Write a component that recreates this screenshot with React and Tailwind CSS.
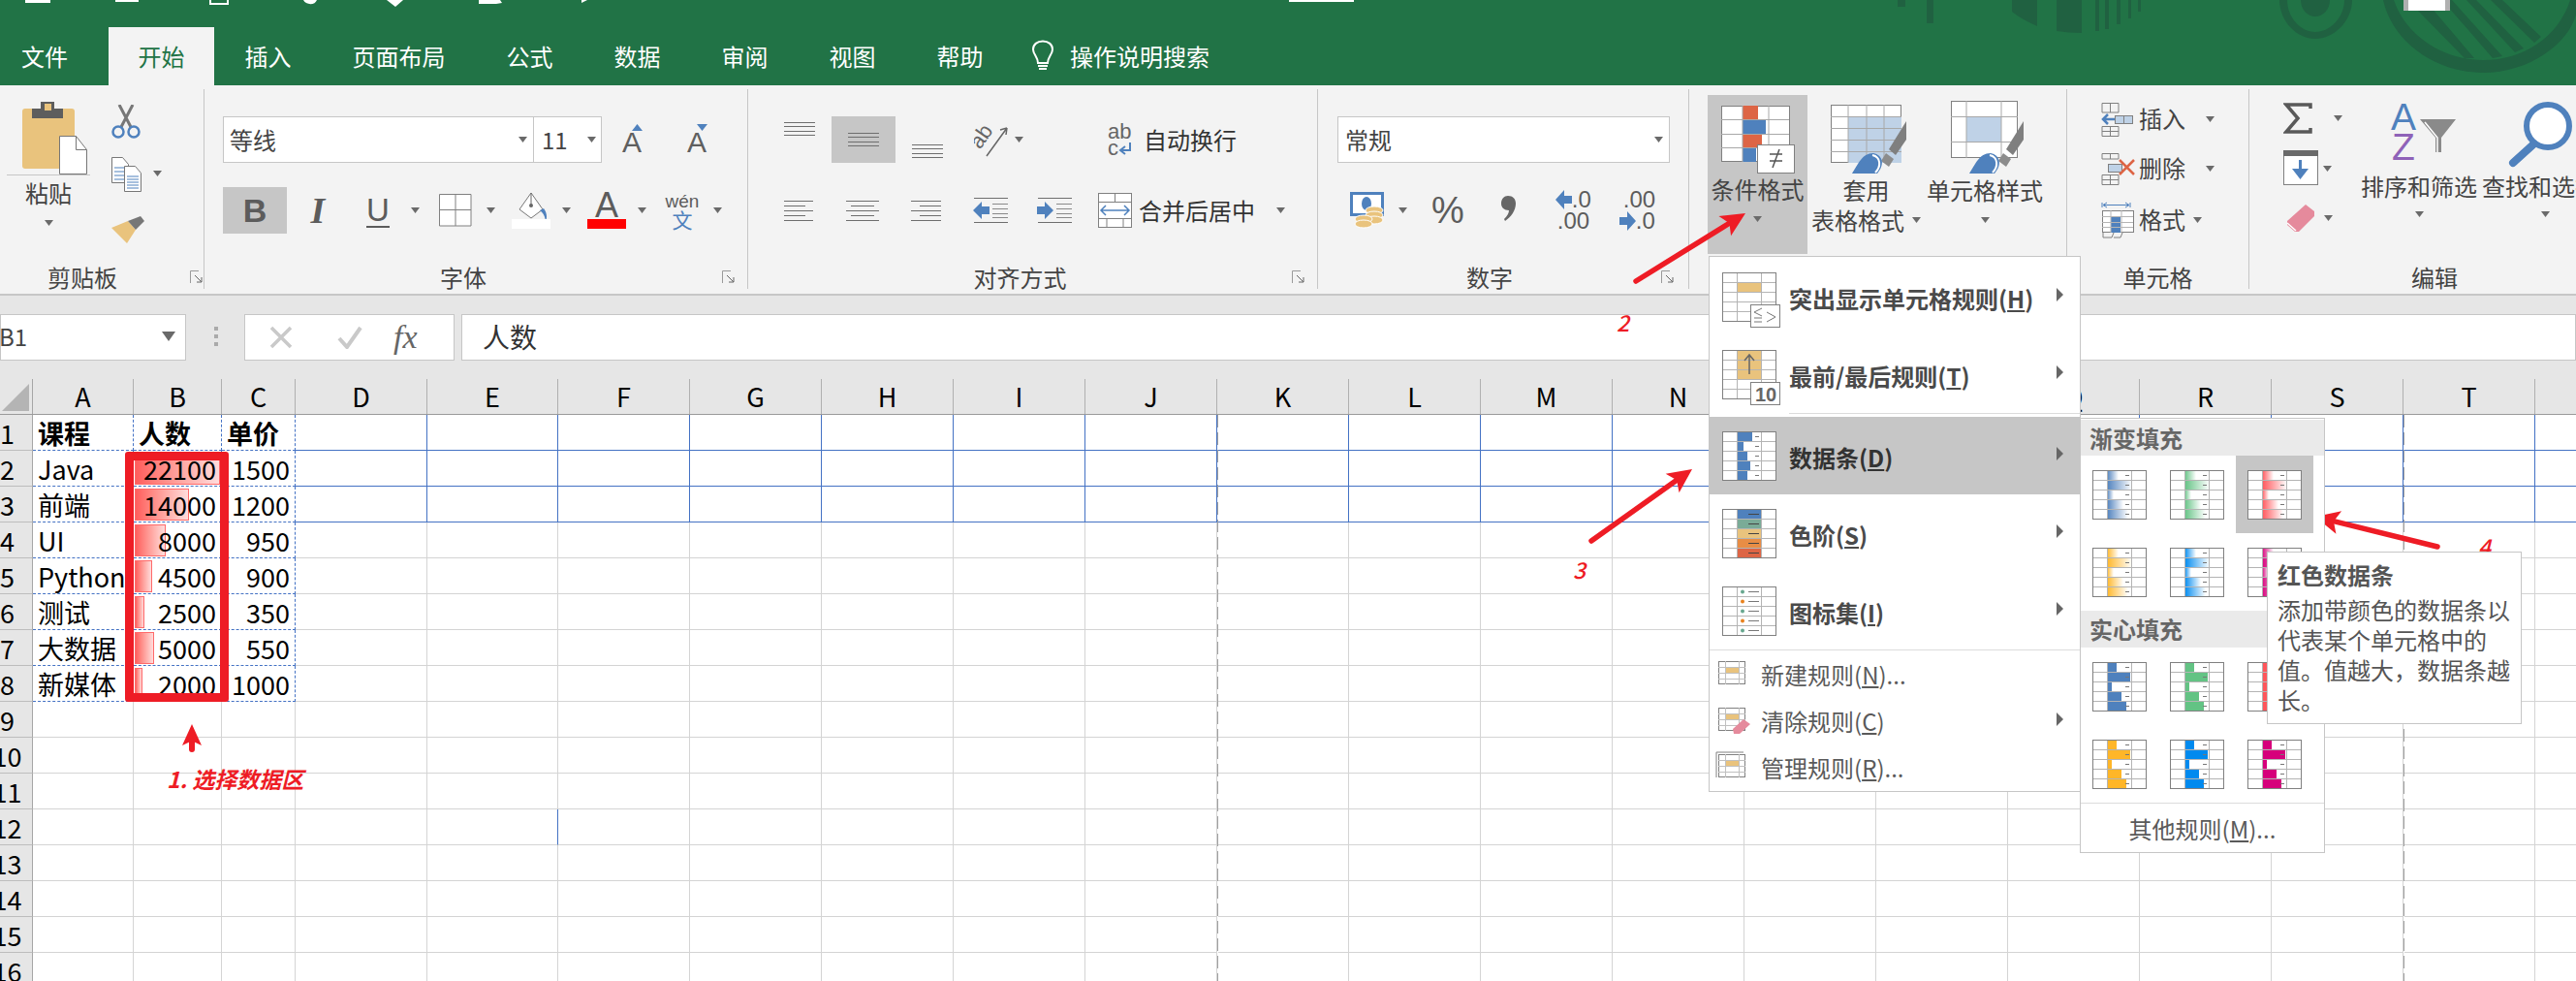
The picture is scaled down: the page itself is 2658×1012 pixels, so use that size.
const GRAY = "#5f5f5f";
const BLUE = "#4f81bd";
const TAN = "#e9c37d";

function Caret({ className = "" }) {
  return (
    <svg width="9" height="6" className={`shrink-0 ${className}`}>
      <path d="M0 0H9L4.5 6Z" fill="#6a6a6a" />
    </svg>
  );
}

function Launcher() {
  return (
    <svg width="14" height="14" className="shrink-0">
      <path d="M.5 13V.5H9" fill="none" stroke="#9a9a9a" />
      <path d="M5 5L12 12M12 7V12H7" fill="none" stroke="#666" />
    </svg>
  );
}

// ribbon group, label row sits at the bottom
function Group({ className, label, labelClass = "", launcher, children }) {
  return (
    <div className={`flex h-[215px] shrink-0 flex-col ${className}`}>
      <div className="relative flex-1">{children}</div>
      <div className="flex h-[32px] items-center pb-[3px]">
        <div className={`flex-1 text-center text-[24px] leading-[29px] text-[#444] ${labelClass}`}>{label}</div>
        {launcher && <Launcher />}
      </div>
    </div>
  );
}

function Sep() {
  return <div className="my-[4px] h-[206px] w-px shrink-0 bg-[#c6c6c6]" />;
}

/* clipboard icons */
function PasteIcon() {
  return (
    <svg width="68" height="76">
      <rect x="0" y="8" width="54" height="62" rx="3" fill={TAN} />
      <path d="M10 18V8h9V1h14v7h9v10z" fill="#5d5d5d" />
      <rect x="23" y="3" width="7" height="7" fill={TAN} />
      <path d="M38.500 36.500h17l11 14v25h-28z" fill="#fff" stroke="#777" />
      <path d="M55.500 36.500v14h11" fill="none" stroke="#777" />
    </svg>
  );
}
function ScissorsIcon() {
  return (
    <svg width="30" height="35">
      <path d="M8 0L20 23M22 0L10 23" stroke="#777" strokeWidth="3" fill="none" />
      <ellipse cx="7" cy="28" rx="5.500" ry="5.500" fill="none" stroke={BLUE} strokeWidth="2.500" />
      <ellipse cx="23" cy="28" rx="5.500" ry="5.500" fill="none" stroke={BLUE} strokeWidth="2.500" />
    </svg>
  );
}
function CopyIcon() {
  return (
    <svg width="31" height="36">
      <path d="M.5.500h11l6 7v19H.5z" fill="#fff" stroke="#777" />
      <path d="M13.500 9.500h11l6 7v19h-17z" fill="#fff" stroke="#777" />
      <path d="M3 11h10M3 15h10M3 19h10M3 23h10M16 20h12M16 23h12M16 26h12M16 29h12M16 32h12" stroke={BLUE} />
    </svg>
  );
}
function PainterIcon() {
  return (
    <svg width="34" height="28">
      <path d="M0 12L17 5L25 14L16 28Z" fill={TAN} />
      <path d="M17 5L25 14L34 5L30 0Z" fill="#777" />
    </svg>
  );
}

/* font group */
function AGrow({ up }) {
  return (
    <div className="flex w-[20px] flex-col items-center">
      <svg width="11" height="7" className="ml-[10px]">
        {up ? <path d="M0 7H11L5.500 0Z" fill={BLUE} /> : <path d="M0 0H11L5.500 7Z" fill={BLUE} />}
      </svg>
      <span className="font-['Liberation_Sans',sans-serif] text-[30px] leading-[24px] text-[#5f5f5f]">A</span>
    </div>
  );
}
function FillIcon() {
  return (
    <div className="flex w-[40px] flex-col items-center">
      <svg width="34" height="28">
        <path d="M17 1L5 18L17 27L29 18Z" fill="#fff" stroke="#777" />
        <circle cx="17" cy="14" r="2" fill="#666" />
        <path d="M17 1V13" stroke="#666" />
        <path d="M30 17c3 4 4 9 2 13c-1-5-2-8-6-11z" fill={BLUE} />
      </svg>
      <div className="h-[10px] w-[40px] bg-white" />
    </div>
  );
}

/* alignment group */
function Lines({ w, h, rows, align = "left" }) {
  const step = (h - 1) / (rows.length - 1);
  return (
    <svg width={w} height={h} className="shrink-0">
      {rows.map((len, i) => {
        const x = align === "left" ? 0 : align === "right" ? w - len : (w - len) / 2;
        return <rect key={i} x={x} y={Math.round(i * step)} width={len} height="1" fill="#6e6e6e" />;
      })}
    </svg>
  );
}
function Indent({ flip }) {
  return (
    <svg width="36" height="26" className="shrink-0">
      <path d="M1 .5H36M1 25.500H36" stroke="#6e6e6e" />
      <path d="M20 6.500H36M20 11.500H36M20 16.500H36M20 20.500H36" stroke="#8a8a8a" />
      {flip ? <path d="M0 9H8V4L17 13L8 22V17H0Z" fill={BLUE} /> : <path d="M17 9H9V4L0 13L9 22V17H17Z" fill={BLUE} />}
    </svg>
  );
}
function OrientIcon() {
  return (
    <svg width="36" height="34" className="shrink-0">
      <path d="M13 33L34 4M34 4L27 6M34 4L33 11" fill="none" stroke="#666" strokeWidth="1.500" />
      <text x="-1" y="19" transform="rotate(-55 10 16)" fontFamily="Liberation Sans" fontSize="22" fill="#666">ab</text>
    </svg>
  );
}
function WrapIcon() {
  return (
    <svg width="26" height="34" className="shrink-0">
      <text x="0" y="16" fontFamily="Liberation Sans" fontSize="22" fill="#666">ab</text>
      <text x="0" y="33" fontFamily="Liberation Sans" fontSize="22" fill="#666">c</text>
      <path d="M23 20V28H14M18 24L13 28L18 32" fill="none" stroke={BLUE} strokeWidth="2" />
    </svg>
  );
}
function MergeIcon() {
  return (
    <svg width="36" height="37" className="shrink-0">
      <rect x=".5" y=".5" width="34" height="35" fill="#fff" stroke="#808080" />
      <path d="M0 9.500H35M0 26.500H35M17.500 0V9M9 27V36M26 27V36" stroke="#808080" />
      <path d="M3 18H32M8 13L3 18L8 23M27 13L32 18L27 23" fill="none" stroke={BLUE} strokeWidth="1.500" />
    </svg>
  );
}

/* number group */
function MoneyIcon() {
  return (
    <svg width="36" height="38" className="shrink-0">
      <rect x="1.500" y="1.500" width="32" height="22" fill="#fff" stroke={BLUE} strokeWidth="3" />
      <ellipse cx="17" cy="12" rx="5" ry="7" fill={BLUE} />
      <ellipse cx="25" cy="19" rx="9" ry="4" fill={TAN} stroke="#fff" />
      <ellipse cx="25" cy="24" rx="9" ry="4" fill={TAN} stroke="#fff" />
      <ellipse cx="25" cy="29" rx="9" ry="4" fill={TAN} stroke="#fff" />
      <ellipse cx="14" cy="28" rx="9" ry="4" fill={TAN} stroke="#fff" />
      <ellipse cx="14" cy="33" rx="9" ry="4" fill={TAN} stroke="#fff" />
    </svg>
  );
}
function CommaIcon() {
  return (
    <svg width="16" height="26" className="shrink-0">
      <path d="M8 0C13 0 16 3 16 8C16 15 11 22 5 26L4 24C7 21 9 18 9 15C4 15 1 12 1 8C1 3 4 0 8 0Z" fill="#666" />
    </svg>
  );
}
function SmallArrow({ right }) {
  return (
    <svg width="17" height="20" className="shrink-0">
      {right ? <path d="M0 6H8V0L17 10L8 20V14H0Z" fill={BLUE} /> : <path d="M17 6H9V0L0 10L9 20V14H17Z" fill={BLUE} />}
    </svg>
  );
}

/* styles group */
function CondFormatIcon() {
  return (
    <svg width="76" height="70" className="overflow-visible">
      <rect x=".5" y=".5" width="70" height="57" fill="#fff" stroke="#808080" />
      <rect x="22" y="0" width="16" height="14" fill="#dd6545" />
      <rect x="22" y="15" width="24" height="14" fill={BLUE} />
      <rect x="22" y="30" width="20" height="14" fill="#dd6545" />
      <rect x="22" y="44" width="14" height="14" fill={BLUE} />
      <path d="M22 0V58M49 0V58M0 14.500H70M0 29.500H70M0 43.500H70" stroke="#a8a8a8" />
      <rect x="37.500" y="40.500" width="38" height="29" fill="#fff" stroke="#808080" />
      <path d="M50 50H63M50 57H63M60 45L53 64" stroke="#555" strokeWidth="1.500" fill="none" />
    </svg>
  );
}
function Brush() {
  return (
    <g>
      <path d="M78 17L78 36L67 52L60 46Z" fill="#7f7f7f" />
      <path d="M57 50L65 56L60 64L52 58Z" fill="#8c8c8c" />
      <path d="M22 71C28 62 32 50 44 50C54 52 56 62 48 71Z" fill={BLUE} />
      <path d="M43 52C52 54 52 64 46 70" fill="none" stroke="#fff" strokeWidth="2" />
    </g>
  );
}
function TableStyleIcon() {
  return (
    <svg width="78" height="72">
      <rect x=".5" y=".5" width="72" height="59" fill="#fff" stroke="#808080" />
      <rect x="18" y="12" width="55" height="48" fill="#bfd2e7" />
      <path d="M18 0V60M37 0V60M55 0V60M0 12.500H73M0 24.500H73M0 36.500H73M0 48.500H73" stroke="#a8a8a8" />
      <Brush />
    </svg>
  );
}
function CellStyleIcon() {
  return (
    <svg width="76" height="76">
      <rect x=".5" y=".5" width="68" height="58" fill="#fff" stroke="#808080" />
      <rect x="16" y="16" width="36" height="26" fill="#bfd2e7" />
      <path d="M16 0V59M52 0V59M0 16.500H69M0 42.500H69" stroke="#a8a8a8" />
      <g transform="translate(-3 4)"><Brush /></g>
    </svg>
  );
}

/* cells group */
function InsertIcon() {
  return (
    <svg width="33" height="35" className="shrink-0">
      <path d="M1 .5H18V10H1ZM1 .5M9.500 0V10M1 24.500H18V34.500H1ZM1 29.500H18M9.500 24V35" fill="none" stroke="#808080" />
      <rect x="14.500" y="13.500" width="18" height="8" fill="#bfd2e7" stroke="#808080" />
      <path d="M23.500 13V22" stroke="#808080" />
      <path d="M14 17H3M7 12L2 17L7 22" fill="none" stroke={BLUE} strokeWidth="2.500" />
    </svg>
  );
}
function DeleteIcon() {
  return (
    <svg width="36" height="33" className="shrink-0">
      <path d="M1 .5H18V6H1ZM9.500 0V6M1 22.500H18V32.500H1ZM1 27.500H18M9.500 22V33" fill="none" stroke="#808080" />
      <rect x="7.500" y="11.500" width="14" height="8" fill="#bfd2e7" stroke="#808080" />
      <path d="M19 7L34 22M34 7L19 22" stroke="#dd6545" strokeWidth="2.500" />
    </svg>
  );
}
function CellFormatIcon() {
  return (
    <svg width="34" height="38" className="shrink-0">
      <path d="M1 1V6M30 1V6" stroke={BLUE} />
      <path d="M3 3.500H28M6 1L2 3.500L6 6M25 1L29 3.500L25 6" fill="none" stroke={BLUE} />
      <rect x="1.500" y="9.500" width="32" height="22" fill="#fff" stroke="#808080" />
      <rect x="10" y="15" width="10" height="17" fill={BLUE} />
      <path d="M1 15.500H33M1 21.500H33M1 26.500H33M10 9V32M21 9V32" stroke="#b5b5b5" />
      <path d="M2 32V37H11L13 32M13 37H20L22 32" fill="none" stroke="#808080" />
    </svg>
  );
}

/* edit group */
function SigmaIcon() {
  return (
    <svg width="30" height="33" className="shrink-0">
      <path d="M28 6V2H3L15 16L3 30H28V26" fill="none" stroke="#595959" strokeWidth="3.500" />
    </svg>
  );
}
function FillDownIcon() {
  return (
    <svg width="37" height="37" className="shrink-0">
      <rect x=".5" y=".5" width="35" height="35" fill="#fff" stroke="#808080" />
      <rect x="0" y="0" width="36" height="6" fill="#6a6a6a" />
      <path d="M17.500 10V26" stroke={BLUE} strokeWidth="3" />
      <path d="M9 19L17.500 30L26 19" fill={BLUE} />
    </svg>
  );
}
function EraserIcon() {
  return (
    <svg width="30" height="29" className="shrink-0">
      <path d="M20 0L29 7L29 12L13 28H9L1 21L1 17Z" fill="#e58a9c" />
      <path d="M1 19L10 27" stroke="#fff" strokeWidth="1.500" />
    </svg>
  );
}
function FunnelIcon() {
  return (
    <svg width="37" height="34" className="shrink-0">
      <path d="M0 0H37L22 19V34H16V19Z" fill="#8a8a8a" />
      <path d="M5 3L18 19V34" fill="none" stroke="#fff" strokeWidth="1.500" />
    </svg>
  );
}
function MagnifierIcon() {
  return (
    <svg width="68" height="68">
      <circle cx="43" cy="25" r="22" fill="#fff" stroke={BLUE} strokeWidth="6" />
      <path d="M28 44L7 63" stroke={BLUE} strokeWidth="8" strokeLinecap="round" />
    </svg>
  );
}

function Ribbon() {
  return (
    <div className="flex h-[215px] bg-[#f3f3f3] text-[24px] whitespace-nowrap text-[#444]">
      {/* clipboard */}
      <Group className="w-[210px]" label="剪贴板" labelClass="pr-[26px]" launcher>
        <div className="flex">
          <div className="flex w-[100px] flex-col items-center pt-[16px]">
            <div className="w-[86px] border-b border-[#c6c6c6] pl-[16px]">
              <PasteIcon />
            </div>
            <div className="leading-[36px]">粘贴</div>
            <Caret className="mt-[10px]" />
          </div>
          <div className="flex flex-col pt-[20px] pl-[15px]">
            <ScissorsIcon />
            <div className="mt-[19px] flex items-center gap-[12px]">
              <CopyIcon />
              <Caret className="mt-[-2px]" />
            </div>
            <div className="mt-[25px]"><PainterIcon /></div>
          </div>
        </div>
      </Group>
      <Sep />
      {/* font */}
      <Group className="w-[560px] pr-[12px]" label="字体" launcher>
        <div className="flex flex-col pt-[32px] pl-[19px]">
          <div className="flex h-[48px]">
            <div className="flex w-[321px] items-center justify-between border border-[#c6c6c6] bg-white pr-[6px] pl-[6px]">
              <span>等线</span>
              <Caret />
            </div>
            <div className="ml-[-1px] flex w-[71px] items-center justify-between border border-[#c6c6c6] bg-white pr-[5px] pl-[8px]">
              <span>11</span>
              <Caret />
            </div>
            <div className="mt-[8px] ml-[21px]"><AGrow up /></div>
            <div className="mt-[8px] ml-[47px]"><AGrow /></div>
          </div>
          <div className="mt-[25px] flex h-[48px] items-center text-[#5c5c5c]">
            <div className="flex h-[48px] w-[66px] items-center justify-center bg-[#c6c6c6] font-['Liberation_Sans',sans-serif] text-[34px] font-bold">B</div>
            <div className="w-[64px] text-center font-['Liberation_Serif',serif] text-[38px] font-bold italic">I</div>
            <div className="flex w-[60px] flex-col items-center">
              <span className="font-['Liberation_Sans',sans-serif] text-[33px] leading-[33px]">U</span>
              <div className="h-[2px] w-[24px] bg-[#5c5c5c]" />
            </div>
            <Caret className="mr-[12px] ml-[4px]" />
            <svg width="34" height="34" className="ml-[8px] shrink-0">
              <path d="M.5.500H33V33H.5ZM17 0V33M0 16.500H33" fill="#fff" stroke="#808080" />
            </svg>
            <Caret className="ml-[15px]" />
            <div className="ml-[17px]"><FillIcon /></div>
            <Caret className="ml-[12px]" />
            <div className="ml-[17px] flex w-[40px] flex-col items-center">
              <span className="font-['Liberation_Sans',sans-serif] text-[36px] leading-[28px]">A</span>
              <div className="h-[10px] w-[40px] bg-[#ff0000]" />
            </div>
            <Caret className="ml-[12px]" />
            <div className="ml-[20px] flex w-[34px] flex-col items-center leading-none">
              <span className="font-['Liberation_Sans',sans-serif] text-[19px] leading-[19px]">wén</span>
              <span className="text-[21px] leading-[19px] text-[#4f81bd]">文</span>
            </div>
            <Caret className="ml-[15px]" />
          </div>
        </div>
      </Group>
      <Sep />
      {/* alignment */}
      <Group className="w-[587px] pr-[12px]" label="对齐方式" launcher>
        <div className="flex flex-col pt-[32px] pl-[37px]">
          <div className="flex h-[48px]">
            <div className="mt-[6px]"><Lines w={32} h={14} rows={[32, 32, 32, 32]} /></div>
            <div className="ml-[17px] flex h-[48px] w-[66px] items-center justify-center bg-[#c6c6c6]">
              <Lines w={32} h={14} rows={[32, 32, 32, 32]} />
            </div>
            <div className="mt-[29px] ml-[17px]"><Lines w={32} h={14} rows={[32, 32, 32, 32]} /></div>
            <div className="mt-[8px] ml-[32px]"><OrientIcon /></div>
            <Caret className="mt-[21px] ml-[6px]" />
            <div className="ml-[87px] flex items-center">
              <WrapIcon />
              <span className="ml-[11px] text-[#333]">自动换行</span>
            </div>
          </div>
          <div className="mt-[25px] flex h-[48px] items-center">
            <Lines w={30} h={21} rows={[30, 22, 30, 22, 30]} />
            <div className="ml-[34px]"><Lines w={34} h={21} rows={[34, 24, 34, 24, 34]} align="center" /></div>
            <div className="ml-[33px]"><Lines w={31} h={21} rows={[31, 22, 31, 22, 31]} align="right" /></div>
            <div className="ml-[33px]"><Indent /></div>
            <div className="ml-[30px]"><Indent flip /></div>
            <div className="ml-[27px]"><MergeIcon /></div>
            <span className="ml-[6px] text-[#333]">合并后居中</span>
            <Caret className="ml-[22px]" />
          </div>
        </div>
      </Group>
      <Sep />
      {/* number */}
      <Group className="w-[382px] pr-[14px]" label="数字" launcher>
        <div className="flex flex-col pt-[32px] pl-[20px]">
          <div className="flex h-[48px] w-[343px] items-center justify-between border border-[#c6c6c6] bg-white pr-[6px] pl-[7px]">
            <span>常规</span>
            <Caret />
          </div>
          <div className="mt-[25px] flex h-[48px] items-center pl-[13px] text-[#5c5c5c]">
            <MoneyIcon />
            <Caret className="ml-[14px]" />
            <span className="ml-[25px] font-['Liberation_Sans',sans-serif] text-[38px] font-light">%</span>
            <div className="mt-[-4px] ml-[37px]"><CommaIcon /></div>
            <div className="ml-[41px] flex w-[66px] shrink-0 flex-col font-['Liberation_Sans',sans-serif] text-[24px] leading-[22px]">
              <span className="flex items-center"><SmallArrow />.0</span>
              <span className="pl-[2px]">.00</span>
            </div>
            <div className="flex w-[40px] shrink-0 flex-col font-['Liberation_Sans',sans-serif] text-[24px] leading-[22px]">
              <span className="pl-[4px]">.00</span>
              <span className="flex items-center"><SmallArrow right />.0</span>
            </div>
          </div>
        </div>
      </Group>
      <Sep />
      {/* styles, label hidden behind the open menu */}
      <Group className="w-[389px]" label="">
        <div className="flex h-[174px] pt-[10px] pl-[19px] text-[#444]">
          <div className="flex h-[164px] w-[103px] shrink-0 flex-col items-center bg-[#c6c6c6] pt-[11px]">
            <CondFormatIcon />
            <div className="mt-[-2px] leading-[36px]">条件格式</div>
            <Caret className="mt-[10px]" />
          </div>
          <div className="ml-[3px] flex w-[115px] shrink-0 flex-col items-center pt-[10px]">
            <div className="ml-[4px]"><TableStyleIcon /></div>
            <div className="mt-[-1px] leading-[34px]">套用</div>
            <div className="flex items-center gap-[8px] leading-[28px]">表格格式<Caret /></div>
          </div>
          <div className="ml-[5px] flex w-[120px] shrink-0 flex-col items-center pt-[6px]">
            <div className="ml-[6px]"><CellStyleIcon /></div>
            <div className="mt-[-1px] leading-[34px]">单元格样式</div>
            <Caret className="mt-[11px]" />
          </div>
        </div>
      </Group>
      <Sep />
      {/* cells */}
      <Group className="w-[187px]" label="单元格">
        <div className="flex flex-col pt-[17px] pl-[35px]">
          <div className="flex h-[36px] items-center"><InsertIcon /><span className="mt-[-2px] ml-[6px]">插入</span><Caret className="ml-[21px]" /></div>
          <div className="mt-[15px] flex h-[36px] items-center"><DeleteIcon /><span className="mt-[-2px] ml-[3px]">删除</span><Caret className="ml-[21px]" /></div>
          <div className="mt-[16px] flex h-[38px] items-center"><CellFormatIcon /><span className="mt-[-2px] ml-[5px]">格式</span><Caret className="ml-[8px]" /></div>
        </div>
      </Group>
      <Sep />
      {/* edit */}
      <Group className="w-[336px]" label="编辑" labelClass="pl-[46px]">
        <div className="flex pt-[17px] pl-[35px]">
          <div className="flex w-[104px] shrink-0 flex-col">
            <div className="flex h-[34px] items-center"><SigmaIcon /><Caret className="ml-[22px]" /></div>
            <div className="mt-[16px] flex h-[37px] items-center"><FillDownIcon /><Caret className="ml-[4px]" /></div>
            <div className="mt-[18px] flex h-[30px] items-center"><div className="ml-[3px]"><EraserIcon /></div><Caret className="ml-[9px]" /></div>
          </div>
          <div className="ml-[-27px] flex w-[126px] shrink-0 flex-col items-center">
            <div className="flex h-[72px] pl-[9px]">
              <div className="flex flex-col items-center font-['Liberation_Sans',sans-serif] text-[39px] leading-[31px]">
                <span className="text-[#4f81bd]">A</span>
                <span className="text-[#8f62b8]">Z</span>
              </div>
              <div className="mt-[18px] ml-[4px]"><FunnelIcon /></div>
            </div>
            <div className="leading-[30px]">排序和筛选</div>
            <Caret className="mt-[11px]" />
          </div>
          <div className="ml-[2px] flex w-[130px] shrink-0 flex-col items-start">
            <div className="ml-[25px] h-[72px]"><MagnifierIcon /></div>
            <div className="leading-[30px]">查找和选择</div>
            <Caret className="mt-[11px] ml-[61px]" />
          </div>
        </div>
      </Group>
    </div>
  );
}

function TitleBar() {
  const tabs = ["插入", "页面布局", "公式", "数据", "审阅", "视图", "帮助"];
  return (
    <div className="relative h-[88px] bg-[#217346]">
      {/* cropped quick-access icons and the background art */}
      <svg width="2658" height="88" className="absolute inset-0">
        <g fill="#fff">
          <rect x="26" width="26" height="3" />
          <rect x="119" width="24" height="2" />
          <path d="M216 0V5H236V0H234V3H218V0Z" />
          <path d="M313 0C315 5 325 6 327 0Z" />
          <path d="M399 0L408 7L416 0Z" />
          <path d="M494 0V4H512L518 3L516 0Z" />
          <path d="M600 0V3L606 0Z" />
          <rect x="1330" width="67" height="2" />
        </g>
        <g fill="#206141">
          <rect x="1958" width="8" height="7" />
          <rect x="1988" width="7" height="24" />
          <path d="M2076 0H2102V27Q2086 20 2076 12Z" />
          <path d="M2122 0H2148V34Q2134 34 2122 32Z" />
          <path d="M2162 0H2166V32H2162ZM2172 0H2176V30H2172ZM2184 0H2188V25H2184ZM2196 0H2199V19H2196ZM2206 0H2209V12H2206Z" />
          <path d="M2352 0H2427C2427 22 2408 40 2389 40C2370 40 2352 22 2352 0ZM2360 0C2360 18 2374 33 2389 33C2404 33 2419 18 2419 0H2404C2404 10 2397 17 2389 17C2381 17 2374 10 2374 0Z" />
          <path d="M2459 0C2468 42 2512 75 2562 75C2610 75 2650 45 2658 15V0H2652C2640 38 2604 62 2562 62C2520 62 2482 36 2470 0Z" />
          <path d="M2494 10L2543 60L2553 60L2502 0H2494ZM2520 0L2572 60L2582 58L2530 0ZM2545 0L2595 54L2604 50L2555 0ZM2570 0L2615 44L2622 38L2582 0Z" />
        </g>
        <rect x="2480" width="48" height="11" fill="#b0b0b0" />
        <rect x="2485" width="38" height="11" fill="#fff" />
      </svg>
      <div className="relative flex h-[88px] items-start pt-[28px] text-[24px] leading-[60px] text-white">
        <div className="w-[112px] pl-[22px]">文件</div>
        <div className="h-[60px] w-[109px] bg-[#f3f3f3] text-center text-[#217346]">开始</div>
        {tabs.map((t) => (
          <div key={t} className="px-[31.5px]">{t}</div>
        ))}
        <svg width="24" height="34" className="mt-[13px] ml-[18px] shrink-0">
          <path d="M7 24C7 18 2 15 2 10C2 5 6 1.500 12 1.500C18 1.500 22 5 22 10C22 15 17 18 17 24Z" fill="none" stroke="#fff" strokeWidth="2" />
          <path d="M7 27H17M8 30H16" stroke="#fff" strokeWidth="2" />
        </svg>
        <div className="ml-[16px]">操作说明搜索</div>
      </div>
    </div>
  );
}

function FormulaBar() {
  return (
    <div className="flex h-[88px] items-start border-t-2 border-[#c6c6c6] bg-[#e6e6e6] pt-[19px]">
      <div className="flex h-[48px] w-[192px] items-center justify-between border border-[#c6c6c6] bg-white pr-[10px] pb-[2px] text-[24px] text-[#444]">
        <span className="ml-[-2px]">B1</span>
        <svg width="14" height="10"><path d="M0 0H14L7 10Z" fill="#6a6a6a" /></svg>
      </div>
      <div className="ml-[29px] flex w-[3px] flex-col gap-[4px] pt-[13px]">
        <div className="h-[4px] w-[4px] bg-[#aaa]" />
        <div className="h-[4px] w-[4px] bg-[#aaa]" />
        <div className="h-[4px] w-[4px] bg-[#aaa]" />
      </div>
      <div className="ml-[28px] flex h-[48px] w-[217px] items-center border border-[#c6c6c6] bg-white">
        <svg width="24" height="24" className="ml-[25px]">
          <path d="M2 2L22 22M22 2L2 22" stroke="#c9c9c9" strokeWidth="3.500" />
        </svg>
        <svg width="26" height="24" className="ml-[46px]">
          <path d="M2 13L10 22L24 2" fill="none" stroke="#c9c9c9" strokeWidth="4" />
        </svg>
        <span className="ml-[32px] font-['Liberation_Serif',serif] text-[34px] leading-[40px] text-[#666] italic">fx</span>
      </div>
      <div className="ml-[7px] flex h-[48px] flex-1 items-center border border-[#c6c6c6] bg-white pb-[2px] pl-[21px] text-[28px] text-[#333]">人数</div>
    </div>
  );
}

const COLS = [
  ["A", "w-[104px]"], ["B", "w-[91px]"], ["C", "w-[76px]"], ["D", "w-[136px]"], ["E", "w-[135px]"],
  ["F", "w-[136px]"], ["G", "w-[136px]"], ["H", "w-[136px]"], ["I", "w-[136px]"], ["J", "w-[136px]"],
  ["K", "w-[136px]"], ["L", "w-[136px]"], ["M", "w-[136px]"], ["N", "w-[136px]"], ["O", "w-[136px]"],
  ["P", "w-[136px]"], ["Q", "w-[136px]"], ["R", "w-[136px]"], ["S", "w-[136px]"], ["T", "w-[136px]"], ["U", "w-[136px]"],
];

const DATA = [
  ["课程", "人数", "单价"],
  ["Java", 22100, 1500],
  ["前端", 14000, 1200],
  ["UI", 8000, 950],
  ["Python", 4500, 900],
  ["测试", 2500, 350],
  ["大数据", 5000, 550],
  ["新媒体", 2000, 1000],
];

function cellBorder(r, c) {
  if (c < 3 && r < 8) return "border-dashed border-[#4472c4]";
  if (c >= 3 && r < 3) return "border-[#4472c4]";
  if (r === 11 && c === 4) return "border-b-[#d4d4d4] border-r-[#4472c4]";
  return "border-[#d4d4d4]";
}

function Cell({ r, c, width }) {
  const v = DATA[r]?.[c];
  const isNum = typeof v === "number";
  return (
    <div className={`relative h-[37px] shrink-0 border-r border-b ${cellBorder(r, c)} ${width}`}>
      {isNum && c === 1 && (
        <div
          className="absolute top-[2px] left-[1px] h-[33px] border border-[#ff6a6a] bg-linear-to-r from-[#ff5c5c] to-[#ffdcdc]"
          style={{ width: Math.round((v / 22100) * 88) }}
        />
      )}
      {v !== undefined && (
        <div className={`relative px-[5px] leading-[37px] whitespace-nowrap ${isNum ? "text-right" : ""} ${r === 0 ? "font-bold" : ""}`}>
          {v}
        </div>
      )}
    </div>
  );
}

function Sheet() {
  const rows = Array.from({ length: 16 }, (_, i) => i);
  return (
    <div className="text-[27px] text-black">
      <div className="flex h-[36px] items-stretch bg-[#e6e6e6]">
        <div className="w-[34px] shrink-0 border-r border-[#a6a6a6] pt-[5px] pl-[2px]">
          <svg width="28" height="28"><path d="M28 0V28H0Z" fill="#b4b4b4" /></svg>
        </div>
        {COLS.map(([name, w]) => (
          <div key={name} className={`shrink-0 border-r border-[#b0b0b0] text-center leading-[36px] ${w}`}>{name}</div>
        ))}
      </div>
      <div className="border-t border-[#9a9a9a]">
        {rows.map((r) => (
          <div key={r} className="flex">
            <div className="h-[37px] w-[34px] shrink-0 overflow-hidden border-r border-b border-r-[#a6a6a6] border-b-[#bdbdbd] bg-[#e6e6e6]">
              <div className="flex w-[15px] justify-center leading-[37px]">{r + 1}</div>
            </div>
            {COLS.map(([name, w], c) => (
              <Cell key={name} r={r} c={c} width={w} />
            ))}
          </div>
        ))}
      </div>
    </div>
  );
}

/* small table thumbnail shared by the menu icons */
function Thumb({ children, over, w = 56, h = 51 }) {
  return (
    <svg width={w} height={h} viewBox="0 0 56 51" className="shrink-0 overflow-visible">
      <rect x=".5" y=".5" width="55" height="50" fill="#fff" />
      {children}
      <path d="M15.500 0V51M40.500 0V51M0 10.500H56M0 20.500H56M0 30.500H56M0 40.500H56" stroke="#b4b4b4" />
      <rect x=".5" y=".5" width="55" height="50" fill="none" stroke="#808080" />
      {over}
    </svg>
  );
}

function Dashes() {
  return <path d="M34 5.500H38M34 15.500H38M34 25.500H38M34 35.500H38M34 45.500H38" stroke="#777" />;
}

function HighlightThumb() {
  return (
    <Thumb
      over={
        <g>
          <rect x="29.500" y="33.500" width="30" height="23" fill="#fff" stroke="#808080" />
          <path d="M41 37L33 41L41 45M33 47H41M33 51H41M46 41L55 46L46 51" fill="none" stroke="#777" />
        </g>
      }
    >
      <rect x="16" y="11" width="24" height="9" fill={TAN} />
    </Thumb>
  );
}
function TopThumb() {
  return (
    <Thumb
      over={
        <g>
          <rect x="29.500" y="33.500" width="30" height="23" fill="#fff" stroke="#808080" />
          <text x="34" y="53" fontSize="20" fill="#666" fontFamily="Liberation Sans">10</text>
          <path d="M28 25V5M23 11L28 5L33 11" fill="none" stroke="#666" strokeWidth="1.500" />
        </g>
      }
    >
      <rect x="16" y="1" width="24" height="30" fill={TAN} />
    </Thumb>
  );
}
function BarThumb() {
  return (
    <Thumb>
      <rect x="16" y="1" width="15" height="10" fill={BLUE} />
      <rect x="16" y="11" width="6" height="10" fill={BLUE} />
      <rect x="16" y="21" width="10" height="10" fill={BLUE} />
      <rect x="16" y="31" width="13" height="10" fill={BLUE} />
      <rect x="16" y="41" width="10" height="10" fill={BLUE} />
      <Dashes />
    </Thumb>
  );
}
function ScaleThumb() {
  const colors = [BLUE, "#7aab97", TAN, "#e88d45", "#dd6545"];
  return (
    <Thumb>
      {colors.map((col, i) => (
        <rect key={col} x="16" y={i * 10 + 1} width="24" height="10" fill={col} />
      ))}
      <path d="M27 5.500H38M27 15.500H38M27 25.500H38M27 35.500H38M27 45.500H38" stroke="#444" />
    </Thumb>
  );
}
function IconSetThumb() {
  const dots = ["#68a78f", "#e8821e", "#68a78f", "#e8821e", "#68a78f"];
  return (
    <Thumb>
      {dots.map((col, i) => (
        <circle key={i} cx="21" cy={i * 10 + 5.5} r="2" fill={col} />
      ))}
      <path d="M27 5.500H38M27 15.500H38M27 25.500H38M27 35.500H38M27 45.500H38" stroke="#777" />
    </Thumb>
  );
}

function MiniTable({ eraser, stack }) {
  return (
    <svg width="32" height="28" className="shrink-0 overflow-visible">
      {stack && <path d="M0 26V0H28" fill="none" stroke="#808080" transform="translate(-2 -2)" />}
      <rect x=".5" y=".5" width="27" height="23" fill="#fff" stroke="#808080" />
      <rect x="7" y="6" width="14" height="6" fill={TAN} />
      <path d="M7.500 0V24M21.500 0V24M0 6.500H28M0 12.500H28M0 18.500H28" stroke="#c0c0c0" />
      {eraser && <path d="M26 12L33 17L22 27L16 27L15 22Z" fill="#e58a9c" />}
    </svg>
  );
}

function SubArrow() {
  return (
    <svg width="8" height="14" className="absolute top-1/2 left-[358px] mt-[-9px]">
      <path d="M0 0L7 7L0 14Z" fill="#666" />
    </svg>
  );
}

function BigItem({ icon, hot, children, active, arrow = true }) {
  return (
    <div className={`relative flex h-[80px] items-center pl-[13px] font-bold text-[#4a4a4a] ${active ? "bg-[#c6c6c6] text-[#333]" : ""}`}>
      <div className="w-[69px]">{icon}</div>
      <span className="mt-[4px]">
        {children}(<span className="underline underline-offset-2">{hot}</span>)
      </span>
      {arrow && <SubArrow />}
    </div>
  );
}

function SmallItem({ icon, hot, children, tail = "", arrow }) {
  return (
    <div className="relative flex h-[48px] items-center pl-[9px] text-[#5a5a5a]">
      <div className="w-[44px]">{icon}</div>
      <span>
        {children}(<span className="underline underline-offset-2">{hot}</span>){tail}
      </span>
      {arrow && <SubArrow />}
    </div>
  );
}

function CondMenu() {
  return (
    <div className="absolute top-[264px] left-[1763px] w-[384px] border border-[#c6c6c6] bg-white pt-[1px] text-[24px] whitespace-nowrap">
      <BigItem icon={<HighlightThumb />} hot="H">突出显示单元格规则</BigItem>
      <BigItem icon={<TopThumb />} hot="T">最前/最后规则</BigItem>
      <div className="mb-[3px] ml-[82px] h-[1px] bg-[#dcdcdc]" />
      <BigItem icon={<BarThumb />} hot="D" active>数据条</BigItem>
      <BigItem icon={<ScaleThumb />} hot="S">色阶</BigItem>
      <BigItem icon={<IconSetThumb />} hot="I">图标集</BigItem>
      <div className="mb-[1px] h-[1px] bg-[#dcdcdc]" />
      <SmallItem icon={<MiniTable />} hot="N" tail="...">新建规则</SmallItem>
      <SmallItem icon={<MiniTable eraser />} hot="C" arrow>清除规则</SmallItem>
      <SmallItem icon={<MiniTable stack />} hot="R" tail="...">管理规则</SmallItem>
    </div>
  );
}

function DataBarThumb({ color, gradient }) {
  const lengths = [10, 24, 5, 15, 20];
  const id = `bar${color.slice(1)}`;
  return (
    <Thumb w={56} h={51}>
      {gradient && (
        <defs>
          <linearGradient id={id}>
            <stop offset="0" stopColor={color} />
            <stop offset="1" stopColor={color} stopOpacity="0" />
          </linearGradient>
        </defs>
      )}
      {lengths.map((len, i) => (
        <rect key={i} x="15" y={i * 10 + 1} width={gradient ? len + 2 : len} height="10" fill={gradient ? `url(#${id})` : color} />
      ))}
      <Dashes />
    </Thumb>
  );
}

function BarCell({ color, gradient, active }) {
  return (
    <div className={`flex h-[80px] w-[80px] items-center justify-center ${active ? "bg-[#c6c6c6]" : ""}`}>
      <DataBarThumb color={color} gradient={gradient} />
    </div>
  );
}

function BarGrid({ gradient }) {
  return (
    <div className="grid grid-cols-[80px_80px_80px]">
      <BarCell color="#4f81bd" gradient={gradient} />
      <BarCell color="#63c384" gradient={gradient} />
      <BarCell color="#ff555a" gradient={gradient} active={gradient} />
      <BarCell color="#ffb628" gradient={gradient} />
      <BarCell color="#008aef" gradient={gradient} />
      <BarCell color="#d6007b" gradient={gradient} />
    </div>
  );
}

function DataBarMenu() {
  return (
    <div className="absolute top-[431px] left-[2146px] w-[253px] border border-[#c6c6c6] bg-white pt-[1px] pb-0 text-[24px]">
      <div className="h-[37px] bg-[#eaeaea] pl-[9px] leading-[37px] font-bold text-[#666]">渐变填充</div>
      <BarGrid gradient />
      <div className="h-[38px] bg-[#eaeaea] pl-[9px] leading-[38px] font-bold text-[#666]">实心填充</div>
      <BarGrid />
      <div className="h-[1px] bg-[#dcdcdc]" />
      <div className="h-[50px] text-center leading-[52px] text-[#5a5a5a]">
        其他规则(<span className="underline underline-offset-2">M</span>)...
      </div>
    </div>
  );
}

function Tooltip() {
  return (
    <div className="absolute top-[569px] left-[2339px] h-[178px] w-[263px] border border-[#c6c6c6] bg-white pt-[6px] pl-[10px] text-[24px] leading-[31px] text-[#555]">
      <div className="mb-[3px] leading-[34px] font-bold">红色数据条</div>
      <div>添加带颜色的数据条以</div>
      <div>代表某个单元格中的</div>
      <div>值。值越大，数据条越</div>
      <div>长。</div>
    </div>
  );
}

// red callout arrow: shaft plus notched head pointing at x2,y2
function Arrow({ x1, y1, x2, y2, w = 5.5, len = 25, half = 12 }) {
  const d = Math.hypot(x2 - x1, y2 - y1);
  const ux = (x2 - x1) / d;
  const uy = (y2 - y1) / d;
  const bx = x2 - ux * len;
  const by = y2 - uy * len;
  const nx = x2 - ux * len * 0.78;
  const ny = y2 - uy * len * 0.78;
  const pts = [
    [x2, y2],
    [bx - uy * half, by + ux * half],
    [nx, ny],
    [bx + uy * half, by - ux * half],
  ].map((p) => p.join(",")).join(" ");
  return (
    <g>
      <line x1={x1} y1={y1} x2={nx} y2={ny} stroke="#ee1c25" strokeWidth={w} strokeLinecap="round" />
      <polygon points={pts} fill="#ee1c25" />
    </g>
  );
}

function Annotations() {
  return (
    <>
      <div className="absolute top-[466px] left-[129px] h-[258px] w-[107px] rounded-[3px] border-[9px] border-[#ee1c25]" />
      <svg width="2658" height="1012" className="pointer-events-none absolute inset-0">
        <Arrow x1={198} y1={773} x2={198} y2={747} w={6} len={22} half={10} />
        <Arrow x1={1688} y1={290} x2={1801} y2={220} />
        <Arrow x1={1642} y1={558} x2={1746} y2={484} />
        <Arrow x1={2515} y1={564} x2={2389} y2={533} />
      </svg>
      <div className="absolute top-[787px] left-[172px] text-[23px] leading-[32px] font-bold whitespace-nowrap text-[#ee1c25] italic">1. 选择数据区</div>
      <div className="absolute top-[318px] left-[1668px] text-[23px] leading-[28px] font-medium text-[#ee1c25] italic">2</div>
      <div className="absolute top-[573px] left-[1623px] text-[23px] leading-[28px] font-medium text-[#ee1c25] italic">3</div>
      <div className="absolute top-[549px] left-[2557px] text-[23px] leading-[28px] font-medium text-[#ee1c25] italic">4</div>
    </>
  );
}

// page-break dashes run over the cells
function PageBreak({ className }) {
  return (
    <div
      className={`absolute top-[428px] bottom-0 w-px bg-[repeating-linear-gradient(to_bottom,#a0a0a0_0,#a0a0a0_13px,#ffffff_13px,#ffffff_18px)] ${className}`}
    />
  );
}

export default function App() {
  return (
    <div className="relative h-[1012px] w-[2658px] overflow-hidden bg-white font-['Noto_Sans_CJK_SC',sans-serif]">
      <TitleBar />
      <Ribbon />
      <FormulaBar />
      <Sheet />
      <PageBreak className="left-[1256px]" />
      <PageBreak className="left-[2480px]" />
      <Annotations />
      <CondMenu />
      <DataBarMenu />
      <Tooltip />
    </div>
  );
}
